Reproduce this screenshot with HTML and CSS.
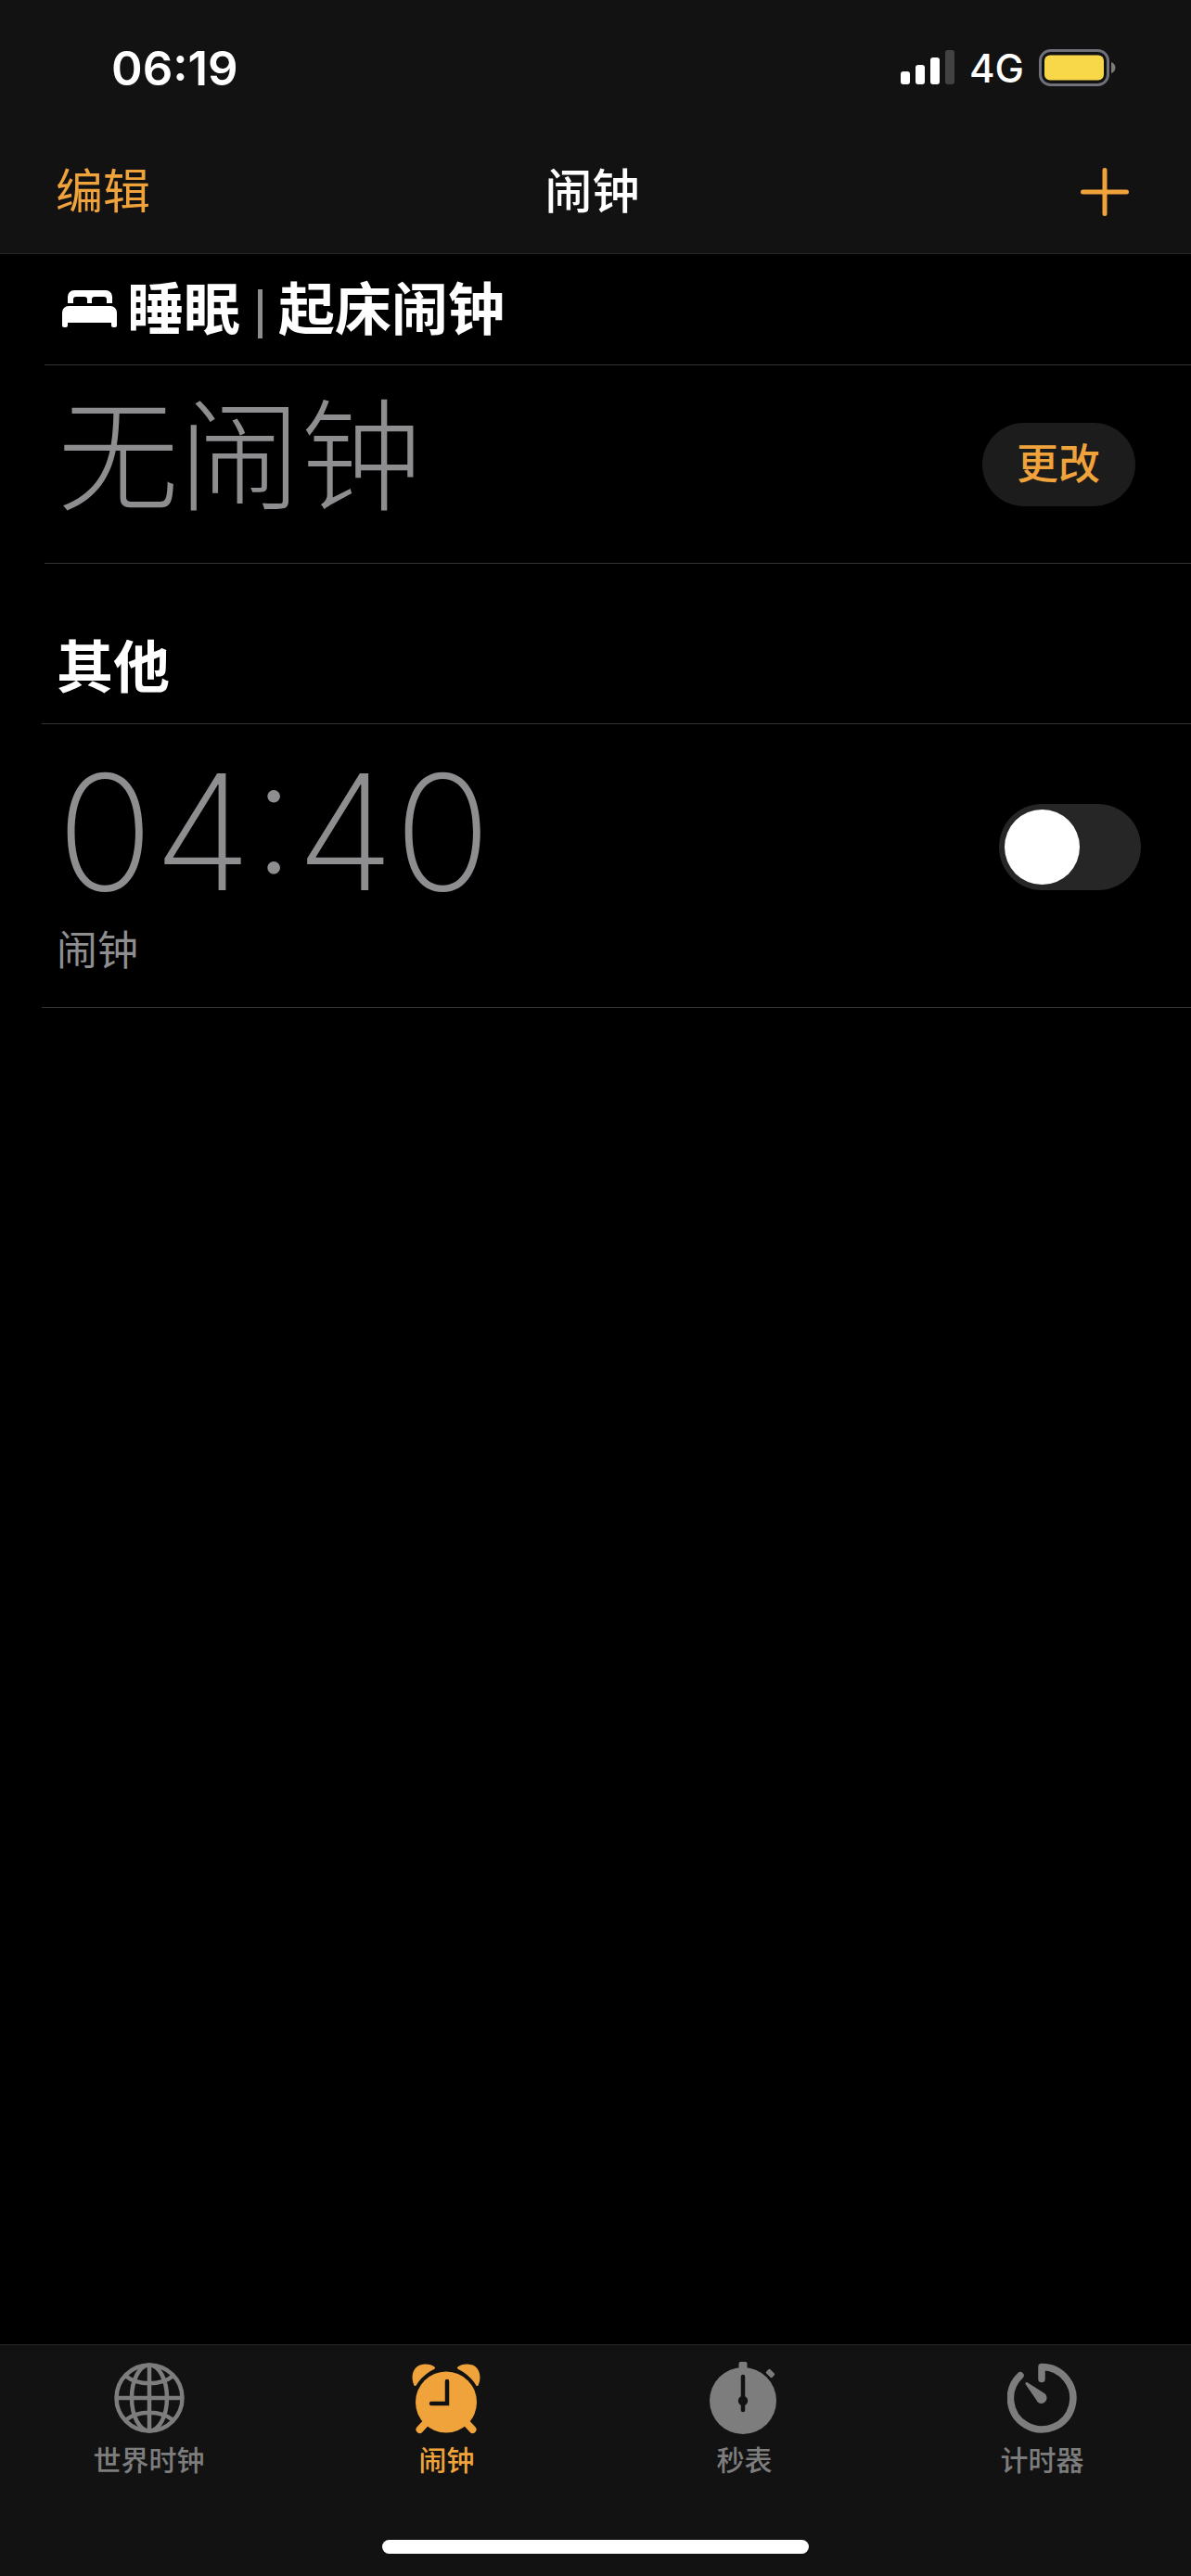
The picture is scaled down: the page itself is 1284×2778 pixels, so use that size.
FILE: index.html
```html
<!DOCTYPE html>
<html lang="zh-CN">
<head>
<meta charset="utf-8">
<meta name="viewport" content="width=device-width, initial-scale=1">
<title>闹钟</title>
<link rel="stylesheet" href="styles.css">
</head>
<body>
<header class="top">
  <div class="status">
    <time class="clock">06:19</time>
    <div class="indicators">
      <svg class="signal" width="58" height="38" viewBox="0 0 58 38" aria-hidden="true">
        <rect x="0" y="23" width="10" height="14" rx="3" fill="#fff"/>
        <rect x="16" y="16" width="10" height="21" rx="3" fill="#fff"/>
        <rect x="32" y="8" width="10" height="29" rx="3" fill="#fff"/>
        <rect x="48" y="0" width="10" height="37" rx="3" fill="#424242"/>
      </svg>
      <span class="network">4G</span>
      <svg class="battery" width="83" height="40" viewBox="0 0 83 40" aria-hidden="true">
        <rect x="1.5" y="1.5" width="73" height="37" rx="11" fill="none" stroke="#6f7078" stroke-width="3"/>
        <rect x="6" y="6.5" width="64" height="27" rx="6" fill="#f8d748"/>
        <path d="M78 14c3 1 4.500 3.500 4.500 6s-1.500 5-4.500 6z" fill="#7b7b74"/>
      </svg>
    </div>
  </div>
  <nav class="navbar">
    <button class="edit" type="button">编辑</button>
    <h1 class="title">闹钟</h1>
    <button class="add" type="button" aria-label="添加闹钟">
      <svg width="52" height="52" viewBox="0 0 52 52" aria-hidden="true"><path d="M26 2.500v47M2.500 26h47" fill="none" stroke="currentColor" stroke-width="5" stroke-linecap="round"/></svg>
    </button>
  </nav>
</header>

<main class="content">
  <section class="group">
    <h2 class="heading">
      <svg class="bed" width="60" height="41" viewBox="0 0 60 41" aria-hidden="true">
        <path fill="currentColor" d="M6 14V7a7 7 0 0 1 7-7h34a7 7 0 0 1 7 7v7h-6V10a3 3 0 0 0-3-3H35a3 3 0 0 0-3 3v4h-5V10a3 3 0 0 0-3-3H15a3 3 0 0 0-3 3v4z"/>
        <path fill="currentColor" d="M0 24a7 7 0 0 1 7-7h45a7 7 0 0 1 7 7v14a2 2 0 0 1-2 2h-2a2 2 0 0 1-2-2v-3H6v3a2 2 0 0 1-2 2H2a2 2 0 0 1-2-2z"/>
      </svg>
      <span>睡眠</span>
      <span class="bar"></span>
      <span>起床闹钟</span>
    </h2>
    <div class="row row-sleep">
      <span class="none">无闹钟</span>
      <button class="change" type="button">更改</button>
    </div>
  </section>

  <section class="group group-other">
    <h2 class="heading">其他</h2>
    <div class="row row-alarm">
      <label class="alarm" for="alarm-0440">
        <span class="alarm-time">04:40</span>
        <span class="alarm-label">闹钟</span>
      </label>
      <input class="switch" id="alarm-0440" type="checkbox" role="switch">
    </div>
  </section>
</main>

<footer class="bottom">
  <nav class="tabs">
    <a class="tab" href="#world">
      <svg width="76" height="78" viewBox="0 0 76 78" fill="none" stroke="currentColor" stroke-width="4.500" aria-hidden="true">
        <circle cx="38" cy="39" r="35.500"/>
        <ellipse cx="38" cy="39" rx="19" ry="35.500"/>
        <path d="M38 3.500v71M2.500 39h71M12 15c14 11 38 11 52 0M12 63c14-11 38-11 52 0"/>
      </svg>
      <span>世界时钟</span>
    </a>
    <a class="tab tab-active" href="#alarm" aria-current="page">
      <svg width="76" height="78" viewBox="1 0 76 78" aria-hidden="true">
        <g fill="currentColor">
          <path d="M3.500 25.500C-1 16 2 3 15 2.500c5 0 8 1 10.500 3 1 1 .5 2-.5 2.500C17 12 10 18 6 25c-.5 1-2 1.500-2.500.5z"/>
          <path d="M72.500 25.500C77 16 74 3 61 2.500c-5 0-8 1-10.500 3-1 1-.5 2 .5 2.500 8 4 15 10 19 17 .5 1 2 1.500 2.500.5z"/>
          <circle cx="38" cy="43.500" r="33"/>
        </g>
        <path d="M16 66l-6.500 7M60 66l6.500 7" stroke="currentColor" stroke-width="8" stroke-linecap="round"/>
        <path d="M39 21v24H22" fill="none" stroke="#121212" stroke-width="4.500" stroke-linecap="round"/>
      </svg>
      <span>闹钟</span>
    </a>
    <a class="tab" href="#stopwatch">
      <svg width="76" height="78" viewBox="2 0 76 78" aria-hidden="true">
        <g fill="currentColor">
          <circle cx="38" cy="42" r="36"/>
          <rect x="33.500" y="0" width="9" height="10" rx="2"/>
          <rect x="63" y="9.500" width="9" height="6" rx="1.500" transform="rotate(45 67.500 12.500)"/>
        </g>
        <path d="M38 16v36" stroke="#121212" stroke-width="4.500" stroke-linecap="round"/>
        <circle cx="38" cy="42" r="5.200" fill="#121212"/>
      </svg>
      <span>秒表</span>
    </a>
    <a class="tab" href="#timer">
      <svg width="76" height="78" viewBox="1 0 76 78" aria-hidden="true">
        <path d="M38 18.500V5.500A33.700 33.700 0 1 1 15 14.700" fill="none" stroke="currentColor" stroke-width="7.500" stroke-linecap="round" stroke-linejoin="round"/>
        <path d="M20.500 22.500c.7-1 1.800-.6 2.500 0L41 34c5 4 2 11-3.500 11-2.500 0-4-1.500-5-3.500L20.500 24z" fill="currentColor"/>
      </svg>
      <span>计时器</span>
    </a>
  </nav>
  <div class="home"></div>
</footer>
</body>
</html>
```
FILE: styles.css
```css
:root {
  --accent: #f1a33b;
  --chrome: #121212;
  --gray: #8e8e90;
  --line: #333335;
}

* {
  box-sizing: border-box;
}

body {
  margin: 0;
  min-height: 100vh;
  display: flex;
  flex-direction: column;
  background: #000;
  color: #fff;
  font-family: Inter, "Noto Sans CJK SC", sans-serif;
}

button {
  border: 0;
  padding: 0;
  background: none;
  color: var(--accent);
  font: inherit;
}

h1,
h2 {
  margin: 0;
}

svg {
  display: block;
}

.top {
  background: var(--chrome);
  border-bottom: 1px solid #262626;
}

.status {
  height: 146px;
  padding: 0 81px 0 120px;
  display: flex;
  align-items: center;
  justify-content: space-between;
}

.clock {
  font-size: 51px;
  font-weight: 600;
}

.indicators {
  display: flex;
  align-items: center;
  gap: 16px;
}

.network {
  font-size: 42px;
  font-weight: 500;
}

.navbar {
  height: 127px;
  padding: 0 67px 6px 60px;
  display: grid;
  grid-template-columns: 1fr auto 1fr;
  align-items: center;
  font-size: 51px;
  line-height: 60px;
}

.edit {
  justify-self: start;
}

.title {
  font-size: 51px;
  font-weight: 500;
}

.add {
  justify-self: end;
}

.content {
  flex: 1;
}

.group {
  padding-left: 48px;
}

.group-other {
  margin-top: 52px;
  padding-left: 45px;
}

.heading {
  height: 120px;
  padding-left: 16px;
  border-bottom: 1px solid var(--line);
  display: flex;
  align-items: center;
  font-size: 61px;
  font-weight: 700;
  line-height: 72px;
}

.group-other .heading {
  height: 121px;
}

.bed {
  margin: 0 10px 0 3px;
}

.bar {
  width: 5px;
  height: 53px;
  margin: 10px 17px 0 19px;
  background: var(--gray);
}

.row {
  display: flex;
  align-items: center;
  justify-content: space-between;
  border-bottom: 1px solid var(--line);
}

.row-sleep {
  height: 214px;
  padding: 0 60px 0 14px;
}

.none {
  padding-bottom: 16px;
  color: var(--gray);
  font-size: 131px;
  font-weight: 300;
  line-height: 160px;
}

.change {
  padding: 0 38px 0 37px;
  border-radius: 45px;
  background: #1c1c1c;
  font-size: 45px;
  font-weight: 500;
  line-height: 90px;
}

.row-alarm {
  height: 306px;
  padding: 0 54px 0 16px;
}

.alarm {
  padding-bottom: 14px;
  display: flex;
  flex-direction: column;
  color: var(--gray);
}

.alarm-time {
  font-size: 173px;
  font-weight: 200;
  line-height: 196px;
}

.alarm-label {
  font-size: 44px;
  line-height: 60px;
}

.switch {
  appearance: none;
  width: 153px;
  height: 93px;
  margin: 0 0 40px;
  padding: 6px;
  border-radius: 47px;
  background: #262626;
}

.switch::before {
  content: "";
  display: block;
  width: 81px;
  height: 81px;
  border-radius: 50%;
  background: #fff;
}

.switch:checked {
  background: var(--accent);
}

.switch:checked::before {
  margin-left: auto;
}

.bottom {
  padding-bottom: 24px;
  background: var(--chrome);
  border-top: 1px solid #262626;
}

.tabs {
  display: grid;
  grid-template-columns: repeat(4, 1fr);
}

.tab {
  padding-top: 18px;
  display: flex;
  flex-direction: column;
  align-items: center;
  gap: 8px;
  color: #7d7d7d;
  font-size: 30px;
  font-weight: 500;
  line-height: 40px;
  text-decoration: none;
}

.tab-active {
  color: var(--accent);
}

.home {
  width: 36%;
  max-width: 460px;
  height: 15px;
  margin: 66px auto 0;
  border-radius: 8px;
  background: #fff;
}
```
